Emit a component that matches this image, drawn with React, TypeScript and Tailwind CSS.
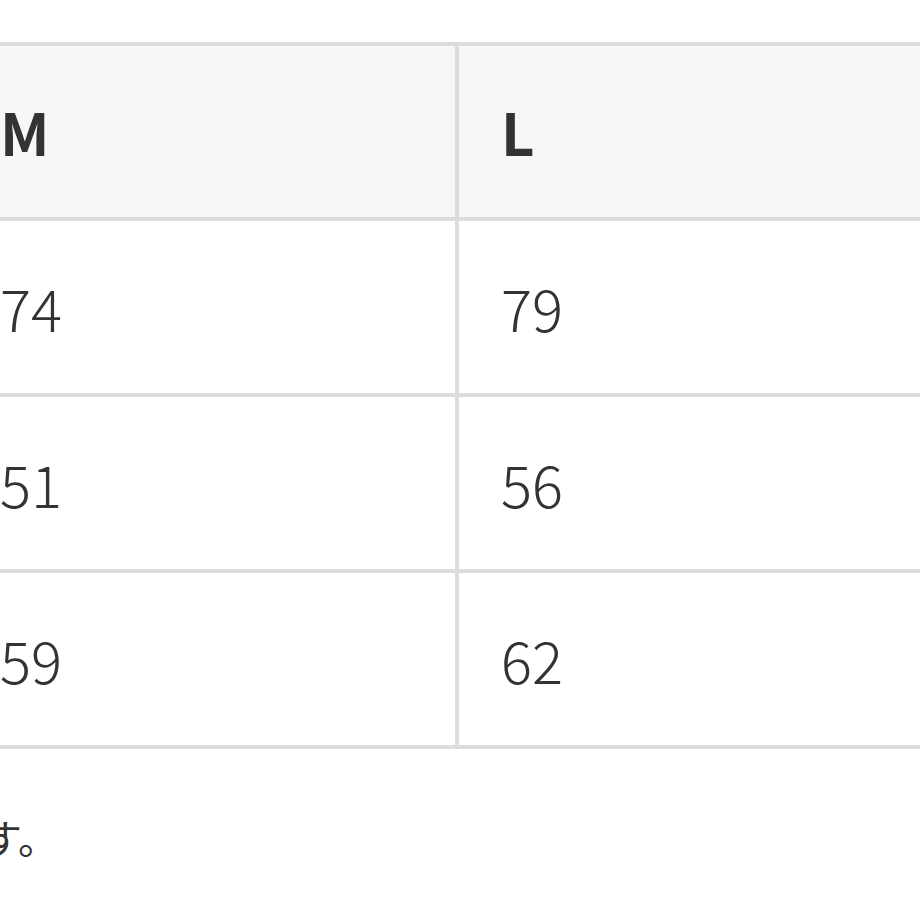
const ROWS: [string, string][] = [
  ["74", "79"],
  ["51", "56"],
  ["59", "62"],
];

export default function App() {
  return (
    <div className="h-[920px] w-[920px] overflow-hidden bg-white font-['Noto_Sans_CJK_JP','Noto_Sans',sans-serif] text-[#333]">
      <div className="ml-[-46px] mt-[42px] w-[1010px] border-t-4 border-[#dcdcdc]">
        <div className="flex h-[175px] border-b-4 border-[#dcdcdc] bg-[#f7f7f7] text-[58px] font-bold">
          <div className="flex w-[505px] items-center border-x-4 border-[#dcdcdc] pl-[42px]">M</div>
          <div className="flex w-[500px] items-center border-r-4 border-[#dcdcdc] pl-[42px]">L</div>
        </div>
        {ROWS.map(([m, l]) => (
          <div key={m} className="flex h-[176px] border-b-4 border-[#dcdcdc] text-[58px] font-light">
            <div className="flex w-[505px] items-center border-x-4 border-[#dcdcdc] pl-[42px]">{m}</div>
            <div className="flex w-[500px] items-center border-r-4 border-[#dcdcdc] pl-[42px]">{l}</div>
          </div>
        ))}
      </div>
      <div className="mt-[58px] flex w-[58px] justify-end whitespace-nowrap text-[40px] leading-[60px]">
        <span>※商品により多少の誤差がございます。</span>
      </div>
    </div>
  );
}
